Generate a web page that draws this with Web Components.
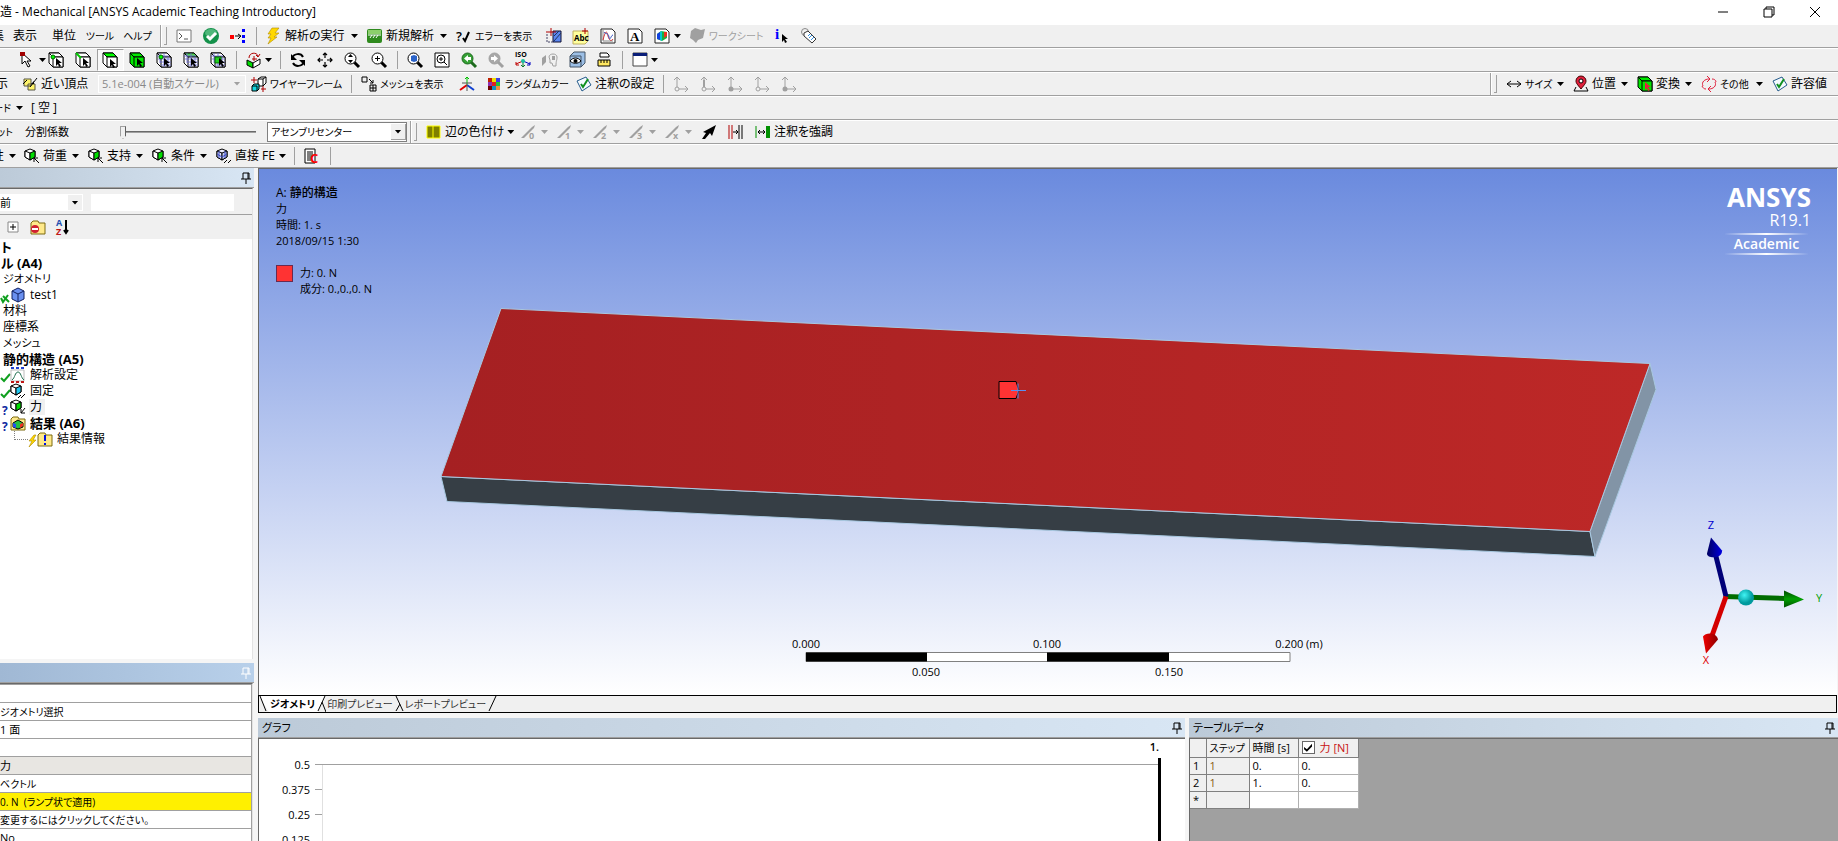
<!DOCTYPE html>
<html lang="ja">
<head>
<meta charset="utf-8">
<title>Mechanical</title>
<style>
  html, body { height: 100%; margin: 0; }
  body {
    overflow: hidden;
    background: #f0f0f0;
    color: #000;
    font: 12px/16px "Open Sans", "Noto Sans CJK JP", sans-serif;
    font-feature-settings: "palt";
  }
</style>
</head>
<body>
<mech-app>
  <title-bar slot="title">造 - Mechanical [ANSYS Academic Teaching Introductory]</title-bar>

  <tool-bar slot="bars">
    <tool-clip w="4">集</tool-clip>
    <tool-button w="42" menu>表示</tool-button>
    <tool-button w="36" menu>単位</tool-button>
    <tool-button w="36" menu kana>ツール</tool-button>
    <tool-button w="39" menu kana>ヘルプ</tool-button>
    <tool-grip></tool-grip>
    <tool-button w="27" icon="console" label="コンソール"></tool-button>
    <tool-button w="27" icon="ok" label="確認"></tool-button>
    <tool-button w="27" icon="nodes" label="ノード"></tool-button>
    <tool-sep></tool-sep>
    <tool-button w="101" icon="bolt" arrow>解析の実行</tool-button>
    <tool-button w="89" icon="analysis" arrow>新規解析</tool-button>
    <tool-button w="90" icon="query" kana>エラーを表示</tool-button>
    <tool-button w="27" icon="section" label="断面"></tool-button>
    <tool-button w="27" icon="abc" label="注釈"></tool-button>
    <tool-button w="27" icon="chart" label="チャート"></tool-button>
    <tool-button w="27" icon="letter" label="コメント"></tool-button>
    <tool-button w="36" icon="figure" label="図" arrow></tool-button>
    <tool-button w="84" icon="sheet" kana disabled>ワークシート</tool-button>
    <tool-button w="27" icon="info" label="情報"></tool-button>
    <tool-button w="27" icon="tag" label="タグ"></tool-button>
  </tool-bar>

  <tool-bar slot="bars">
    <tool-clip w="15"></tool-clip>
    <tool-button w="28" icon="cursor" label="選択" arrow></tool-button>
    <tool-button w="27" icon="selVertex" label="頂点"></tool-button>
    <tool-button w="27" icon="selEdge" label="辺"></tool-button>
    <tool-button w="27" icon="selFace" label="面" selected></tool-button>
    <tool-button w="27" icon="selBody" label="ボディ"></tool-button>
    <tool-button w="27" icon="meshNode" label="節点"></tool-button>
    <tool-button w="27" icon="meshFace" label="要素面"></tool-button>
    <tool-button w="27" icon="meshElem" label="要素"></tool-button>
    <tool-sep></tool-sep>
    <tool-button w="35" icon="extend" label="拡張" arrow></tool-button>
    <tool-sep></tool-sep>
    <tool-button w="27" icon="rotate" label="回転"></tool-button>
    <tool-button w="27" icon="pan" label="移動"></tool-button>
    <tool-button w="27" icon="zoom" label="ズーム"></tool-button>
    <tool-button w="27" icon="zoomBox" label="拡大"></tool-button>
    <tool-sep></tool-sep>
    <tool-button w="27" icon="zoomFit" label="フィット"></tool-button>
    <tool-button w="27" icon="magnifier" label="拡大鏡"></tool-button>
    <tool-button w="27" icon="prev" label="前のビュー"></tool-button>
    <tool-button w="27" icon="next" label="次のビュー" disabled></tool-button>
    <tool-button w="27" icon="iso" label="等角"></tool-button>
    <tool-button w="27" icon="lookAt" label="正面" disabled></tool-button>
    <tool-button w="27" icon="eye" label="ビュー管理"></tool-button>
    <tool-button w="27" icon="ruler" label="再スケール"></tool-button>
    <tool-sep></tool-sep>
    <tool-button w="35" icon="window" label="ビューポート" arrow></tool-button>
  </tool-bar>

  <tool-bar slot="bars">
    <tool-clip w="8">示</tool-clip>
    <tool-clip w="9"></tool-clip>
    <tool-button w="81" icon="nearVertex">近い頂点</tool-button>
    <tool-select w="148" disabled label="スケール">5.1e-004 (自動スケール)</tool-select>
    <tool-button w="101" icon="wire" kana>ワイヤーフレーム</tool-button>
    <tool-sep></tool-sep>
    <tool-button w="98" icon="mesh" kana>メッシュを表示</tool-button>
    <tool-button w="27" icon="triad" label="座標軸"></tool-button>
    <tool-button w="90" icon="colors" kana>ランダムカラー</tool-button>
    <tool-button w="88" icon="note">注釈の設定</tool-button>
    <tool-sep></tool-sep>
    <tool-button w="27" icon="axis1" label="軸 1" disabled></tool-button>
    <tool-button w="27" icon="axis2" label="軸 2" disabled></tool-button>
    <tool-button w="27" icon="axis3" label="軸 3" disabled></tool-button>
    <tool-button w="27" icon="axis1" label="軸 4" disabled></tool-button>
    <tool-button w="27" icon="axis3" label="軸 5" disabled></tool-button>
    <tool-fill></tool-fill>
    <tool-grip></tool-grip>
    <tool-button w="67" icon="size" kana arrow>サイズ</tool-button>
    <tool-button w="64" icon="place" arrow>位置</tool-button>
    <tool-button w="64" icon="convert" arrow>変換</tool-button>
    <tool-button w="71" icon="cycle" kana arrow>その他</tool-button>
    <tool-button w="71" icon="note">許容値</tool-button>
  </tool-bar>

  <tool-bar slot="bars">
    <tool-button w="26" cut kana arrow>ード</tool-button>
    <tool-button w="36" menu>[ 空 ]</tool-button>
  </tool-bar>

  <tool-bar slot="bars">
    <tool-clip w="13" kana>ット</tool-clip>
    <tool-slider>分割係数</tool-slider>
    <tool-select w="140" label="ビュー">アセンブリセンター</tool-select>
    <tool-grip></tool-grip>
    <tool-button w="95" icon="edgeColor" arrow>辺の色付け</tool-button>
    <tool-button w="36" icon="edge0" label="辺 0" arrow disabled></tool-button>
    <tool-button w="36" icon="edge1" label="辺 1" arrow disabled></tool-button>
    <tool-button w="36" icon="edge2" label="辺 2" arrow disabled></tool-button>
    <tool-button w="36" icon="edge3" label="辺 3" arrow disabled></tool-button>
    <tool-button w="36" icon="edgeX" label="辺 X" arrow disabled></tool-button>
    <tool-button w="27" icon="thickArrow" label="方向"></tool-button>
    <tool-button w="27" icon="gap" label="間隔"></tool-button>
    <tool-button w="90" icon="emph">注釈を強調</tool-button>
  </tool-bar>

  <tool-bar slot="bars">
    <tool-button w="19" cut arrow>性</tool-button>
    <tool-button w="64" icon="load" arrow>荷重</tool-button>
    <tool-button w="64" icon="load" arrow>支持</tool-button>
    <tool-button w="64" icon="load" arrow>条件</tool-button>
    <tool-button w="79" icon="directFe" arrow>直接 FE</tool-button>
    <tool-sep></tool-sep>
    <tool-button w="27" icon="command" label="コマンド"></tool-button>
    <tool-sep></tool-sep>
  </tool-bar>

  <dock-pane slot="outline">
    <outline-filter></outline-filter>
    <model-tree></model-tree>
  </dock-pane>
  <dock-pane slot="details" active>
    <detail-grid></detail-grid>
  </dock-pane>
  <model-view slot="view"></model-view>
  <view-tabs slot="tabs"></view-tabs>
  <dock-pane slot="graph" heading="グラフ"><graph-plot></graph-plot></dock-pane>
  <dock-pane slot="table" heading="テーブルデータ"><step-table></step-table></dock-pane>
</mech-app>

<script>
'use strict';

(function() {
  const CURSOR = (x, y, fill = '#000') =>
    `<path d="M${x} ${y}l6 5h-3l2 3-2 1-1-3-2 2z" fill="${fill}"/>`
  const BOX = (fill, top, side) => `
    <path d="M1 1h10l4 4v10H5L1 11z" fill="${side}" stroke="#000"/>
    <path d="M1 1h10l4 4H5z" fill="${top}" stroke="#000"/>
    <path d="M5 5h10v10H5z" fill="${fill}" stroke="#000"/>`
  const GRID = '<path d="M1 4h10M2 7h13M4 10h11M5 13h10M4 1v10M8 1v14M12 3v12" stroke="#6a6ad0" stroke-width=".8" fill="none"/>'
  const LENS = (fill = '#fff', stroke = '#000') => `
    <path d="M10 10l5 5" stroke="${stroke}" stroke-width="3"/>
    <circle cx="6.500" cy="6.500" r="5.500" fill="${fill}" stroke="${stroke}"/>`
  const CUBE = (l, r, t) => `
    <path d="M1 3l5-2 5 2v6l-5 3-5-3z" fill="${t}" stroke="#000"/>
    <path d="M1 3l5 2v7l-5-3z" fill="${l}" stroke="#000"/>
    <path d="M6 5l5-2v6l-5 3z" fill="${r}" stroke="#000"/>`
  const AXES = dot => `
    <path d="M4 13V1M1 4l3-3 3 3M4 13h11M12 10l3 3-3 3" stroke="#a0a0a0" fill="none"/>${dot}`
  const EDGE = n => `
    <path d="M0 14L11 3l3-2-1 3L3 14z" fill="#a0a0a0"/>
    <text x="8" y="15" font-size="9" font-weight="700" fill="#a0a0a0">${n}</text>`
  const FOLDER = '<path d="M1 4l2-2h5l1 2h6v11H1z" fill="#ffe98a" stroke="#7d6a10"/>'

  const ICONS = {
    console: '<path d="M1 2h14v12H1z" fill="#fff" stroke="#777"/><path d="M3 5l3 3-3 3M8 11h4" stroke="#555" fill="none"/>',
    ok: '<circle cx="8" cy="8" r="8" fill="#14914a"/><ellipse cx="8" cy="5" rx="6" ry="4" fill="#4fb77a"/><path d="M4 8l3 3 6-6" stroke="#fff" stroke-width="3" fill="none"/>',
    nodes: '<path d="M0 7h4v4H0z" fill="#f00"/><path d="M12 1h3v3h-3zM12 7h3v3h-3zM12 12h3v3h-3z" fill="#00f"/><path d="M5 8h5M8 6l3 2-3 3" stroke="#000" fill="none"/>',
    bolt: '<path d="M6 0h7L9 5h4L8 9h3L2 16l3-6H2l3-4H2z" fill="#ffd800" stroke="#b08a00" stroke-width=".6"/>',
    analysis: '<rect y="1" width="15" height="14" rx="2" fill="#2f8a1e"/><path d="M1 2h13v4H1z" fill="#8ccf6c"/><path d="M1 7h13M3 10l2-3M6 10l2-3M9 10l2-3" stroke="#fff" fill="none"/>',
    query: '<text x="0" y="13" font-size="13" font-weight="600">?</text><path d="M7 10l2 3 4-9" stroke="#000" stroke-width="2" fill="none"/>',
    section: '<path d="M7 3h8v11H7z" fill="#5a86f0" stroke="#113"/><path d="M8 8l5-5M8 13l7-8" stroke="#235" /><path d="M1 6v8h6" stroke="#446" stroke-dasharray="2 1" fill="none"/><path d="M0 4h10M5 0v8" stroke="#b00000"/>',
    abc: '<path d="M0 3h15v10l-3 3H0z" fill="#ffff9c" stroke="#c0b060"/><text x="1" y="13" font-size="8" font-weight="700">Abc</text><path d="M9 3h6M12 0v6" stroke="#b00000"/>',
    chart: '<path d="M1 1h11l3 3v11H1z" fill="#fff" stroke="#222"/><path d="M3 2v11M3 13h10" stroke="#888"/><path d="M3 12c3-12 4-8 5-4s3 6 5 3" stroke="#d03030" fill="none"/><path d="M4 4c2 3 4 0 5 5s2-2 4-2" stroke="#3050c0" fill="none"/>',
    letter: '<path d="M1 1h11l3 3v11H1z" fill="#fff" stroke="#222"/><text x="3" y="13" font-size="13" font-weight="700" font-family="Liberation Serif">A</text>',
    figure: '<path d="M1 1h11l3 3v11H1z" fill="#fff" stroke="#222"/><path d="M3 6l4-3 6 1v6l-5 3-5-2z" fill="#1cae3c"/><path d="M3 6l3-2v8l-3-1z" fill="#1040e0"/><path d="M6 4l2-1v10l-2-1z" fill="#00c8d0"/><path d="M10 4l3 0v4l-3 2z" fill="#f03020"/>',
    sheet: '<path d="M1 3l4-3 6 2 4-1-2 9-5 2-2 3-3-3-3-2z" fill="#a0a0a0"/>',
    info: '<text x="1" y="11" font-size="15" font-weight="700" fill="#00f" font-family="Liberation Serif">i</text>' + CURSOR(8, 6),
    tag: '<circle cx="4" cy="4" r="3.500" fill="none" stroke="#888"/><path d="M3 5l4-2 8 8-4 4-8-7z" fill="#fff" stroke="#333"/><path d="M7 8l2-2M8 10l3-3M10 12l3-3" stroke="#2f8fe0"/>',
    cursor: '<path d="M2 1v11l3-3 3 6 2-1-3-5h4z" fill="#fff" stroke="#000"/><path d="M0 0h5v4H0z" fill="#a00000"/>',
    selVertex: BOX('#fff', '#fff', '#fff') + '<circle cx="5" cy="5" r="2" fill="#0f0" stroke="#060"/>' + CURSOR(8, 6),
    selEdge: BOX('#fff', '#fff', '#fff') + '<path d="M1 1l5 5" stroke="#0c0" stroke-width="2"/>' + CURSOR(8, 6),
    selFace: BOX('#fff', '#0f0', '#fff') + CURSOR(8, 7),
    selBody: BOX('#00e800', '#00e800', '#00e800') + CURSOR(8, 6),
    meshNode: BOX('#fff', '#fff', '#fff') + GRID + '<circle cx="5" cy="5" r="2" fill="#0f0" stroke="#060"/>' + CURSOR(8, 6),
    meshFace: BOX('#fff', '#50d050', '#fff') + GRID + CURSOR(8, 6),
    meshElem: BOX('#fff', '#fff', '#fff') + GRID + '<path d="M5 5h6v6H5z" fill="#20d020" stroke="#060"/>' + CURSOR(9, 6),
    extend: '<path d="M1 8l6 3v5l-6-3z" fill="#0d0" stroke="#000"/><path d="M7 11l7-4v5l-7 4z" fill="#fff" stroke="#000"/><path d="M3 6c0-6 8-6 9-2M10 3l2 2 2-3M8 4v5M6 7h5" stroke="#b00000" fill="none"/>',
    rotate: '<path d="M2 6c2-5 9-5 11-1" stroke="#000" stroke-width="2" fill="none"/><path d="M1 2v6h6z"/><path d="M14 10c-2 5-9 5-11 1" stroke="#000" stroke-width="2" fill="none"/><path d="M15 14V8H9z"/>',
    pan: '<path d="M8 1v5M8 10v5M1 8h5M10 8h5M6 3l2-2 2 2M6 13l2 2 2-2M3 6L1 8l2 2M13 6l2 2-2 2" stroke="#000" stroke-width="1.200" fill="none"/>',
    zoom: LENS() + '<path d="M6.500 2l2.500 3H4zM6.500 11L4 8h5z"/>',
    zoomBox: LENS() + '<path d="M4 6.500h5M6.500 4v5" stroke="#000"/>',
    zoomFit: LENS() + '<path d="M4 4l3-1 3 1v5l-3 1-3-1z" fill="#2a62c8"/>',
    magnifier: '<path d="M1 1h14v14H1z" fill="#fff" stroke="#000"/><circle cx="7" cy="7" r="4" fill="#fff" stroke="#000"/><path d="M5 7h4M7 5v4M10 10l3 3" stroke="#000"/>',
    prev: LENS('#35a035', '#1d6a1d') + '<path d="M3 6.500L7 3v2h3v3H7v2z" fill="#fff"/>',
    next: LENS('#a8a8a8', '#a0a0a0') + '<path d="M10 6.500L6 3v2H3v3h3v2z" fill="#fff"/>',
    iso: '<text x="0" y="5" font-size="7" font-weight="700">ISO</text><path d="M8 9v6M6 13l2 2 2-2" stroke="#0a7a2a" fill="none"/><path d="M8 9l-7 3M1 10v3h3" stroke="#c00000" fill="none"/><path d="M8 9l7 3M15 10v3h-3" stroke="#0000c0" fill="none"/><circle cx="8" cy="9" r="2" fill="#1cc0a0"/>',
    lookAt: '<path d="M0 6l4-3v7l-4 4z" fill="#a0a0a0"/><path d="M7 5c0-4 8-4 8 0s-1 3-1 9h-3l-1-3H8V8z" fill="none" stroke="#a0a0a0"/><path d="M10 4h3v4h-3z" fill="#a0a0a0"/>',
    eye: '<path d="M1 4l4-4h11v11l-4 4H1z" fill="#9cbfe6" stroke="#456"/><path d="M1 4h11v11" stroke="#456" fill="none"/><path d="M1 9c3-4 8-4 11 0-3 3-8 3-11 0z" fill="#fff" stroke="#000"/><circle cx="6.500" cy="9" r="2"/>',
    ruler: '<path d="M4 1h7l2 2v2H4z" fill="#fff" stroke="#000"/><path d="M2 8h12v6H2z" fill="#ffe860" stroke="#000"/><path d="M5 8v3M8 8v3M11 8v3" stroke="#000"/>',
    window: '<path d="M1 1h14v13H1z" fill="#fff" stroke="#444"/><path d="M1 1h14v3H1z" fill="#0a1e78"/>',
    nearVertex: '<path d="M2 3h7v7H2zM6 8h7v6H6z" fill="#fff46a" stroke="#554"/><path d="M1 8l4-4M8 11l7-9" stroke="#000"/><path d="M9 8l3-3v3z"/>',
    wire: '<path d="M7 3l3-2h5v6l-3 3H7zM7 3h5v7M12 3l3-2" fill="#fff" stroke="#000"/><path d="M1 10l2-2h5v5l-2 2H1z" fill="#16d8e0" stroke="#000"/><path d="M1 10h5v5" fill="none" stroke="#000"/><path d="M0 4h6M3 1v6M10 13h5M12 10v6" stroke="#b00000"/>',
    mesh: '<path d="M1 1h5v5H1zM9 9h6v6H9zM12 9v6M9 12h6" fill="none" stroke="#000"/><path d="M8 3l4 4M12 4v3H9" fill="none" stroke="#000"/>',
    triad: '<path d="M8 9V1M6 3l2-2 2 2" stroke="#00c000" fill="none"/><path d="M8 9l-7 5" stroke="#e00000" stroke-width="2"/><path d="M8 9l7 5" stroke="#1040d0" stroke-width="2"/><path d="M3 7h10M8 9v6" stroke="#555"/>',
    colors: '<path d="M2 2h4v4H2z" fill="#c02000"/><path d="M6 2h4v4H6z" fill="#f0e000"/><path d="M10 2h4v4h-4z" fill="#4040e0"/><path d="M2 6h4v4H2z" fill="#9030b0"/><path d="M6 6h4v4H6z" fill="#e02020"/><path d="M10 6h4v4h-4z" fill="#20c040"/><path d="M2 10h4v4H2z" fill="#700000"/><path d="M6 10h4v4H6z" fill="#1090c0"/><path d="M10 10h4v4h-4z" fill="#f09040"/>',
    note: '<path d="M1 5l9-4 5 8-9 6z" fill="#f4faff" stroke="#245a8a"/><path d="M5 8l2 3 5-8" stroke="#109020" stroke-width="2" fill="none"/>',
    axis1: AXES('<circle cx="4" cy="13" r="2" fill="#f0f0f0" stroke="#a0a0a0"/>'),
    axis2: AXES('<path d="M3 4h2v9H3z" fill="#a0a0a0"/><circle cx="4" cy="13" r="2" fill="#f0f0f0" stroke="#a0a0a0"/>'),
    axis3: AXES('<circle cx="4" cy="13" r="2.500" fill="#a0a0a0"/>'),
    size: '<path d="M1 8h14M5 5L1 8l4 3M11 5l4 3-4 3" stroke="#000" fill="none"/>',
    place: '<path d="M8 13C4 8 3 7 3 5a5 5 0 0110 0c0 2-1 3-5 8z" fill="#e0203c" stroke="#400"/><circle cx="8" cy="5" r="2" fill="#fff" stroke="#000"/><path d="M3 11l-2 4h14l-2-4" stroke="#000" fill="none"/>',
    convert: BOX('#00e800', '#00e800', '#00e800') + CURSOR(8, 6, '#e02040'),
    cycle: '<path d="M2 10C0 6 4 3 8 3M6 0l3 3-3 3M14 6c2 4-2 7-6 7M10 10l-3 3 3 3M11 3c2 0 4 1 4 3M5 13c-2 0-3-1-4-3" stroke="#e0203c" fill="none"/>',
    edgeColor: '<path d="M1 2h13v12H1z" fill="#808000" stroke="#ffff00"/><path d="M7 2v12" stroke="#ffff00"/>',
    edge0: EDGE('0'), edge1: EDGE('1'), edge2: EDGE('2'), edge3: EDGE('3'), edgeX: EDGE('x'),
    thickArrow: '<path d="M1 15l4-6-3-1L15 1l-4 11-2-3-5 6z"/>',
    gap: '<path d="M1 1v14M4 1v14" stroke="#b00000"/><path d="M11 1v14M14 1v14M5 8h5M8 6l2 2-2 2" stroke="#000" fill="none"/>',
    emph: '<path d="M1 2v12" stroke="#009000"/><path d="M11 2h4v12h-4z" fill="#009000"/><path d="M3 8h7M5 6L3 8l2 2M8 6l2 2-2 2" stroke="#000" fill="none"/>',
    load: CUBE('#fff', '#0d0', '#fff') + '<path d="M10 10l5 5M10 14v-4h4" stroke="#000" fill="none"/>',
    fixed: CUBE('#fff', '#20c8f0', '#fff') + '<path d="M8 15l3-3M11 15l4-4" stroke="#000"/>',
    force: CUBE('#fff', '#0d0', '#fff') + '<path d="M15 9l-4 5M11 10v4h4" stroke="#000" fill="none"/>',
    directFe: CUBE('#dfe4ff', '#c4ccf4', '#eef') + '<path d="M3 3v7M9 3v7M1 6l5 3 5-3" stroke="#3a48c0" fill="none"/><path d="M8 15l3-3M12 15l3-3" stroke="#000"/>',
    command: '<path d="M1 1h10v14H1z" fill="#fff" stroke="#000"/><path d="M3 4h6M3 6h6M3 8h5M3 10h4M3 12h4" stroke="#000"/><text x="6" y="15" font-size="13" font-weight="700" fill="#f00">C</text>',
    plus: '<path d="M3 3h10v10H3z" fill="#fff" stroke="#888"/><path d="M5 8h6M8 5v6" stroke="#000"/>',
    folderStop: FOLDER + '<circle cx="5" cy="10" r="4" fill="#d02030"/><path d="M2 10h6" stroke="#fff" stroke-width="2"/>',
    sort: '<text x="1" y="7" font-size="9" font-weight="700" fill="#2450b0">A</text><text x="1" y="16" font-size="9" font-weight="700" fill="#c01818">Z</text><path d="M11 1v13M9 11l2 3 2-3" stroke="#000" stroke-width="2" fill="none"/>',
    part: '<path d="M2 4l6-3 6 3v8l-6 3-6-3z" fill="#6a90f0" stroke="#102060"/><path d="M2 4l6 3 6-3M8 7v8" stroke="#102060" fill="none"/>',
    settings: '<path d="M1 3h13v11H1z" fill="#fff" stroke="#bbb"/><path d="M2 13c3-2 3-8 6-8s3 6 6 8" stroke="#207050" fill="none"/><path d="M1 1h3M6 1h3M11 1h3" stroke="#2040d0" stroke-width="2"/><path d="M1 15h3M6 15h3M11 15h3" stroke="#c01818" stroke-width="2"/>',
    results: FOLDER + '<path d="M3 8l5-3 5 3v4l-5 2-5-2z" fill="#20c040" stroke="#000"/><path d="M3 8l3 1v4l-3-1z" fill="#2050f0"/><path d="M10 9l3-1v3l-3 2z" fill="#f03020"/>',
    notice: FOLDER + '<path d="M8 4v6M8 12v2" stroke="#0010e0" stroke-width="2"/>',
    check: '<path d="M1 11l3 3 6-7" stroke="#10a020" stroke-width="2" fill="none"/>',
    suppressed: '<path d="M1 11l2 4 5-7M3 9l6 6" stroke="#10a020" stroke-width="2" fill="none"/>',
    pending: '<text x="2" y="16" font-size="12" font-weight="700" fill="#1028a0">?</text>',
    flash: '<path d="M6 4L1 10h3l-3 6 7-7H5l3-5z" fill="#ffd800" stroke="#b08a00" stroke-width=".6"/>',
    pin: '<path d="M5 3h6v6M5 3v6M3 9h10M8 9v5M10 3v6" stroke="currentColor" fill="none"/>',
    min: '<path d="M3 8h10" stroke="#000"/>',
    restore: '<path d="M3 5h8v8H3zM5 5V3h8v8h-2" stroke="#000" fill="none"/>',
    close: '<path d="M3 3l10 10M13 3L3 13" stroke="#000" fill="none"/>'
  }

  const icon = name => `
    <svg class="icon" viewBox="0 0 16 16" width="16" height="16" aria-hidden="true">${ICONS[name] || ''}</svg>`

  class BaseElement extends HTMLElement {
    constructor() {
      super()
      this.attachShadow({ mode: 'open' })
    }

    connectedCallback() {
      this.shadowRoot.innerHTML = `
        <style>
        * { box-sizing: border-box; }
        :host { display: block; box-sizing: border-box; }
        button, select, input { margin: 0; padding: 0; border: 0; border-radius: 0; background: none; color: inherit; font: inherit; font-feature-settings: inherit; }
        .icon { flex: none; display: block; overflow: visible; }
        .arrow { flex: none; width: 7px; height: 4px; background: currentColor; clip-path: polygon(0 0, 100% 0, 50% 100%); }
        </style>
        ${this.render()}
      `
    }

    render() {
      return ''
    }

    width() {
      return `:host { flex: none; width: ${this.getAttribute('w')}px; }`
    }
  }

  class MechApp extends BaseElement {
    render() {
      return `
        <style>
        :host { display: flex; flex-direction: column; height: 100vh; }
        .work { flex: 1; min-height: 0; display: flex; gap: 4px; background: #f5f5f5; }
        .side { flex: none; width: 254px; display: flex; flex-direction: column; gap: 4px; }
        .main { flex: 1; min-width: 0; display: flex; flex-direction: column; }
        .bottom { flex: none; height: 123px; display: flex; gap: 4px; margin-top: 5px; }
        ::slotted([slot=outline]), ::slotted([slot=view]) { flex: 1; min-height: 0; }
        ::slotted([slot=details]) { flex: none; height: 178px; }
        ::slotted([slot=graph]) { flex: 10; min-width: 0; }
        ::slotted([slot=table]) { flex: 7; min-width: 0; }
        </style>
        <slot name="title"></slot>
        <slot name="bars"></slot>
        <div class="work">
          <div class="side">
            <slot name="outline"></slot>
            <slot name="details"></slot>
          </div>
          <div class="main">
            <slot name="view"></slot>
            <slot name="tabs"></slot>
            <div class="bottom">
              <slot name="graph"></slot>
              <slot name="table"></slot>
            </div>
          </div>
        </div>
      `
    }
  }

  class TitleBar extends BaseElement {
    render() {
      return `
        <style>
        :host { flex: none; display: flex; align-items: center; height: 24px; background: #fff; }
        .name { flex: 1; }
        button { width: 46px; height: 20px; display: flex; align-items: center; justify-content: center; }
        </style>
        <span class="name"><slot></slot></span>
        <button aria-label="最小化">${icon('min')}</button>
        <button aria-label="元に戻す">${icon('restore')}</button>
        <button aria-label="閉じる">${icon('close')}</button>
      `
    }
  }

  class ToolBar extends BaseElement {
    render() {
      return `
        <style>
        :host { flex: none; display: flex; align-items: center; height: 24px; border-top: 1px solid #fff; border-bottom: 1px solid #a0a0a0; background: #f0f0f0; }
        </style>
        <slot></slot>
      `
    }
  }

  class ToolButton extends BaseElement {
    render() {
      const has = name => this.hasAttribute(name)
      const label = this.getAttribute('label')
      return `
        <style>
        ${this.width()}
        :host([kana]) { font-size: 10px; }
        button { width: 100%; height: 22px; display: flex; align-items: center; gap: 3px; padding: 0 4px 0 5px; white-space: nowrap; }
        button:disabled { color: #a0a0a0; }
        :host([menu]) button { justify-content: center; padding: 0; }
        :host([cut]) button { justify-content: flex-end; gap: 5px; padding: 0 3px 0 0; overflow: hidden; }
        :host([selected]) button { border: 1px solid #a0a0a0; border-right-color: #fff; border-bottom-color: #fff; background: #f8f8f8; padding-left: 4px; }
        .arrow { margin-left: auto; }
        :host([cut]) .arrow { margin-left: 0; }
        </style>
        <button type="button" ${label ? `aria-label="${label}"` : ''} ${has('disabled') ? 'disabled' : ''}>
          ${has('icon') ? icon(this.getAttribute('icon')) : ''}
          ${label ? '' : '<span><slot></slot></span>'}
          ${has('arrow') ? '<i class="arrow"></i>' : ''}
        </button>
      `
    }
  }

  // 左端で切れている項目
  class ToolClip extends BaseElement {
    render() {
      return `
        <style>
        ${this.width()}
        :host { display: flex; justify-content: flex-end; overflow: hidden; white-space: nowrap; }
        :host([kana]) { font-size: 10px; }
        </style>
        <slot></slot>
      `
    }
  }

  class ToolSep extends BaseElement {
    render() {
      return `
        <style>
        :host { flex: none; width: 9px; height: 18px; padding-left: 4px; }
        i { display: block; width: 1px; height: 100%; background: #a0a0a0; }
        </style>
        <i></i>
      `
    }
  }

  class ToolGrip extends BaseElement {
    render() {
      return `
        <style>
        :host { flex: none; display: flex; align-items: center; justify-content: space-between; width: 14px; height: 22px; padding: 0 4px 0 3px; }
        .end { width: 2px; height: 22px; background: #a0a0a0; border-right: 1px solid #fff; }
        .grip { width: 3px; height: 18px; border: 1px solid #a0a0a0; border-width: 0 1px 1px 0; }
        </style>
        <i class="end"></i><i class="grip"></i>
      `
    }
  }

  class ToolFill extends BaseElement {
    render() {
      return '<style>:host { flex: 1; }</style>'
    }
  }

  class ToolSelect extends BaseElement {
    render() {
      const off = this.hasAttribute('disabled')
      return `
        <style>
        ${this.width()}
        :host { display: flex; align-items: center; height: ${off ? 18 : 20}px; border: 1px solid ${off ? '#fff' : '#808080'}; background: ${off ? '#f0f0f0' : '#fff'}; }
        select { flex: 1; min-width: 0; height: 100%; padding-left: 3px; appearance: none; font-size: ${off ? 11 : 10}px; }
        select:disabled { color: #888; opacity: 1; }
        .drop { width: 15px; height: 16px; display: grid; place-items: center; background: #f0f0f0; color: ${off ? '#a0a0a0' : '#000'}; border: 1px solid ${off ? '#f0f0f0' : '#a0a0a0'}; border-width: 0 1px 1px 0; }
        </style>
        <select aria-label="${this.getAttribute('label')}" ${off ? 'disabled' : ''}><option>${this.textContent}</option></select>
        <span class="drop"><i class="arrow"></i></span>
      `
    }
  }

  class ToolSlider extends BaseElement {
    render() {
      return `
        <style>
        :host { flex: none; display: flex; align-items: center; width: 254px; padding: 0 11px 0 12px; font-size: 11px; }
        label { flex: 1; }
        input { width: 136px; height: 16px; appearance: none; }
        input::-webkit-slider-runnable-track { height: 2px; background: #6a6a6a; border-bottom: 1px solid #a0a0a0; }
        input::-webkit-slider-thumb { appearance: none; width: 6px; height: 13px; margin-top: -5px; background: #f0f0f0; border: 1px solid #a0a0a0; border-right-color: #606060; clip-path: polygon(0 0, 100% 0, 100% 75%, 50% 100%, 0 75%); }
        </style>
        <label for="factor"><slot></slot></label>
        <input id="factor" type="range" min="0" max="100" value="0">
      `
    }
  }

  class DockPane extends BaseElement {
    render() {
      return `
        <style>
        :host { display: flex; flex-direction: column; }
        header { flex: none; height: 20px; display: flex; align-items: center; justify-content: space-between; padding: 0 0 0 4px; background: linear-gradient(90deg, #bccad8, #d8e6f4); border-bottom: 1px solid #a0a0a0; font-size: 11px; }
        :host([active]) header { background: linear-gradient(90deg, #a0b8d4, #b8d0ea); color: #fff; }
        button { width: 16px; height: 16px; }
        .content { flex: 1; min-height: 0; display: flex; flex-direction: column; overflow: hidden; border-top: 1px solid #696969; border-left: 1px solid #696969; }
        :host([slot=outline]) .content, :host([slot=details]) .content { border-left: 0; border-right: 1px solid #e3e3e3; margin-right: 1px; }
        </style>
        <header>
          <span>${this.getAttribute('heading') || ''}</span>
          <button type="button" aria-label="自動的に隠す">${icon('pin')}</button>
        </header>
        <div class="content"><slot></slot></div>
      `
    }
  }

  class OutlineFilter extends BaseElement {
    render() {
      return `
        <style>
        :host { flex: none; background: #f0f0f0; }
        .row { display: flex; align-items: center; height: 26px; gap: 8px; padding: 2px 18px 0 0; border-bottom: 1px solid #a0a0a0; }
        .pick { display: flex; align-items: center; width: 83px; height: 17px; background: #fff; }
        .pick select { flex: 1; height: 17px; appearance: none; font-size: 11px; }
        .pick span { width: 14px; height: 15px; margin-right: 1px; display: grid; place-items: center; background: #f0f0f0; }
        input { flex: 1; min-width: 0; height: 17px; background: #fff; }
        .tools { display: flex; gap: 8px; height: 24px; align-items: center; padding-left: 5px; }
        .tools button { width: 16px; height: 16px; margin-right: 1px; }
        </style>
        <div class="row">
          <span class="pick">
            <select aria-label="フィルター"><option>前</option></select>
            <span><i class="arrow"></i></span>
          </span>
          <input type="text" aria-label="検索">
        </div>
        <div class="tools">
          <button type="button" aria-label="展開">${icon('plus')}</button>
          <button type="button" aria-label="フォルダー">${icon('folderStop')}</button>
          <button type="button" aria-label="並べ替え">${icon('sort')}</button>
        </div>
      `
    }
  }

  const TREE = [
    { text: 'ト', level: 0, bold: true },
    { text: 'ル (A4)', level: 0, bold: true },
    { text: 'ジオメトリ', level: 1 },
    { text: 'test1', level: 2, state: 'suppressed', icon: 'part' },
    { text: '材料', level: 1 },
    { text: '座標系', level: 1 },
    { text: 'メッシュ', level: 1 },
    { text: '静的構造 (A5)', level: 1, bold: true },
    { text: '解析設定', level: 2, state: 'check', icon: 'settings' },
    { text: '固定', level: 2, state: 'check', icon: 'fixed' },
    { text: '力', level: 2, state: 'pending', icon: 'force', selected: true },
    { text: '結果 (A6)', level: 2, state: 'pending', icon: 'results', bold: true },
    { text: '結果情報', level: 3, state: 'flash', icon: 'notice' }
  ]
  const KANA_REG = /^[ァ-ー]{2,}$/

  class ModelTree extends BaseElement {
    render() {
      return `
        <style>
        :host { flex: 1; min-height: 0; overflow: hidden; background: #fff; }
        ul { margin: 0; padding: 0; list-style: none; }
        li { display: flex; align-items: center; height: 16px; white-space: nowrap; }
        .l1 { padding-left: 2px; }
        .l3 { padding-left: 14px; }
        .l3::before { content: ""; width: 13px; height: 8px; margin-bottom: 8px; border: 1px dotted #808080; border-width: 0 0 1px 1px; }
        .state { width: 10px; height: 16px; }
        .l3 .state { width: 9px; }
        .text { padding: 0 1px; }
        .icon + .text { margin-left: 3px; }
        .bold { font-weight: 700; font-size: 13px; }
        .kana { font-size: 11px; }
        .selected .text { background: #f0f0f0; padding-right: 3px; }
        </style>
        <ul>
          ${TREE.map(n => `
            <li class="l${n.level} ${n.bold ? 'bold' : ''} ${n.selected ? 'selected' : ''} ${KANA_REG.test(n.text) ? 'kana' : ''}">
              ${n.state ? `<span class="state">${icon(n.state)}</span>` : ''}
              ${n.icon ? icon(n.icon) : ''}
              <span class="text">${n.text}</span>
            </li>`).join('')}
        </ul>
      `
    }
  }

  class DetailGrid extends BaseElement {
    render() {
      const rows = ['', 'ジオメトリ選択', '1 面', '', '力', 'ベクトル', '0. N  (ランプ状で適用)', '変更するにはクリックしてください。', 'No']
      const kind = { 4: 'group', 6: 'edited' }
      return `
        <style>
        :host { flex: 1; background: #fff; }
        table { width: 100%; border-collapse: collapse; table-layout: fixed; font-size: 11px; }
        td { height: 18px; padding: 0; border: 1px solid #a0a0a0; border-width: 1px 1px 1px 0; white-space: pre; overflow: hidden; line-height: 16px; }
        .group { background: #e8e6e2; }
        .edited { background: #fff000; }
        .k { font-size: 10px; }
        </style>
        <table>
          ${rows.map((text, i) => `<tr class="${kind[i] || ''}"><td class="${/[ァ-ン]{3}/.test(text) ? 'k' : ''}">${text}</td></tr>`).join('')}
        </table>
      `
    }
  }

  class ModelView extends BaseElement {
    render() {
      return `
        <style>
        :host { position: relative; overflow: hidden; background: linear-gradient(#6a8ade, #fff); border: solid #696969; border-width: 1px 0 0 1px; margin-right: 1px; }
        .scene { position: absolute; inset: 0; width: 100%; height: 100%; }
        .info { position: absolute; left: 17px; top: 16px; font-size: 11px; }
        p { margin: 0; }
        .title { font-weight: 500; font-size: 12px; }
        .legend { display: flex; gap: 7px; margin-top: 16px; }
        .swatch { width: 17px; height: 17px; border: 1px solid #6a2a50; background: #ff3333; }
        .brand { position: absolute; right: 26px; top: 14px; width: 86px; color: #fff; text-align: right; }
        .brand .name { font-size: 26px; font-weight: 700; line-height: 28px; font-family: "Noto Sans", sans-serif; }
        .brand .rel { font-size: 16px; line-height: 18px; }
        .brand .kind { margin: 4px 3px 0 0; border: solid transparent; border-width: 2px 0; border-image: linear-gradient(90deg, transparent, #fff, transparent) 1; text-align: center; font-size: 14px; font-weight: 600; line-height: 18px; }
        text { font-size: 11px; text-anchor: middle; }
        </style>
        <svg class="scene" viewBox="259 169 1578 525">
          <defs>
            <linearGradient id="face"><stop offset="0" stop-color="#a52022"/><stop offset="1" stop-color="#bd2827"/></linearGradient>
            <linearGradient id="blue"><stop offset="0" stop-color="#000060"/><stop offset="1" stop-color="#0000e0"/></linearGradient>
            <linearGradient id="red"><stop offset="0" stop-color="#f00000"/><stop offset="1" stop-color="#8c0000"/></linearGradient>
            <linearGradient id="green" x2="0" y2="1"><stop offset="0" stop-color="#004800"/><stop offset=".5" stop-color="#00a000"/><stop offset="1" stop-color="#005000"/></linearGradient>
            <radialGradient id="ball" cx=".4" cy=".35"><stop offset="0" stop-color="#40f4f4"/><stop offset="1" stop-color="#009a9e"/></radialGradient>
          </defs>
          <g stroke="#a8c8e0" stroke-linejoin="round">
            <path d="M441 476L1590 531l5 25L447 501z" fill="#363e45"/>
            <path d="M1650 363l6 26-61 167-5-25z" fill="#8294a6"/>
            <path d="M501 308l1149 55-60 168L441 476z" fill="url(#face)"/>
          </g>
          <path d="M999 381h17l3 9-3 8h-17z" fill="#ff3333" stroke="#000"/>
          <path d="M1011 390h15M1018 383v15" stroke="#5a90f0"/>
          <path d="M806 652h484v9H806z" fill="#fff" stroke="#808080"/>
          <path d="M806 652h121v9H806zM1047 652h122v9h-122z"/>
          <g>
            <text x="806" y="647">0.000</text>
            <text x="1047" y="647">0.100</text>
            <text x="1299" y="647">0.200 (m)</text>
            <text x="926" y="675">0.050</text>
            <text x="1169" y="675">0.150</text>
          </g>
          <path d="M1725 596l60 2" stroke="#006c00" stroke-width="5"/>
          <path d="M1784 590l20 9-20 8z" fill="url(#green)"/>
          <circle cx="1746" cy="597" r="8" fill="url(#ball)"/>
          <path d="M1726 596l-11-44" stroke="#000078" stroke-width="5"/>
          <path d="M1711 537l11 13c1 8-15 9-15 3z" fill="url(#blue)"/>
          <path d="M1726 596l-15 42" stroke="#d40000" stroke-width="5"/>
          <path d="M1706 653l-3-17c3-5 14-4 15 3z" fill="url(#red)"/>
          <text x="1711" y="528" fill="#0000d0">Z</text>
          <text x="1819" y="601" fill="#00a000">Y</text>
          <text x="1706" y="663" fill="#e00000">X</text>
        </svg>
        <div class="info">
          <p class="title">A: 静的構造</p>
          <p>力</p>
          <p>時間: 1. s</p>
          <p>2018/09/15 1:30</p>
          <div class="legend">
            <i class="swatch"></i>
            <div><p>力: 0. N</p><p>成分: 0.,0.,0. N</p></div>
          </div>
        </div>
        <div class="brand">
          <div class="name">ANSYS</div>
          <div class="rel">R19.1</div>
          <div class="kind">Academic</div>
        </div>
      `
    }
  }

  class ViewTabs extends BaseElement {
    render() {
      const slant = d => `<svg width="10" height="16" viewBox="0 0 10 16" aria-hidden="true">${d}</svg>`
      const line = d => `<path d="${d}" fill="none" stroke="#000"/>`
      return `
        <style>
        :host { flex: none; display: flex; height: 18px; margin-right: 1px; border: 1px solid #000; background: #f0f0f0; font-size: 10px; }
        svg { flex: none; background: #f0f0f0; }
        button { height: 16px; padding: 0 1px; line-height: 16px; white-space: nowrap; color: #333; }
        .on { background: #fff; color: #000; font-weight: 700; }
        </style>
        ${slant('<path d="M0 0h10v16z" fill="#fff"/>' + line('M1 0l6 15'))}
        <button type="button" class="on">ジオメトリ</button>
        ${slant('<path d="M0 0h10L2 16H0z" fill="#fff"/>' + line('M9 0L2 15M6 6l4 10'))}
        <button type="button">印刷プレビュー</button>
        ${slant(line('M2 0l7 15M6 8l-4 7'))}
        <button type="button">レポートプレビュー</button>
        ${slant(line('M9 0L2 15'))}
      `
    }
  }

  class GraphPlot extends BaseElement {
    render() {
      return `
        <style>
        :host { flex: 1; display: grid; grid-template-columns: 51px 1fr 21px; grid-template-rows: 25px 1fr; column-gap: 5px; background: #fff; font-size: 11px; }
        .end { grid-column: 2; text-align: right; font-weight: 600; }
        .ticks { grid-row: 2; display: flex; flex-direction: column; gap: 9px; text-align: right; margin-top: -7px; height: 84px; overflow: hidden; }
        .plot { grid-row: 2; grid-column: 2 / 3; position: relative; border-top: 1px solid #a0a0a0; }
        .plot::before { content: ""; position: absolute; left: 7px; top: 0; bottom: 0; border-left: 1px solid #e0e0e0; }
        .plot::after { content: ""; position: absolute; right: -2px; top: -7px; bottom: 0; width: 3px; background: #000; }
        .plot i { display: block; width: 7px; height: 25px; border-bottom: 1px solid #a0a0a0; }
        </style>
        <div class="end">1.</div>
        <div class="ticks"><span>0.5</span><span>0.375</span><span>0.25</span><span>0.125</span></div>
        <div class="plot"><i></i><i></i></div>
      `
    }
  }

  class StepTable extends BaseElement {
    render() {
      return `
        <style>
        :host { flex: 1; background: #a0a0a0; }
        table { border-collapse: collapse; font-size: 11px; line-height: 16px; table-layout: fixed; width: 169px; }
        th, td { height: 17px; padding: 0 0 0 3px; border: 1px solid #b0b0b0; border-width: 0 1px 1px 0; text-align: left; font-weight: 400; white-space: nowrap; background: #fff; overflow: hidden; }
        thead th { height: 18px; }
        thead th, tbody th, .step { background: #f0f0f0; border-color: #808080; }
        .step { color: #8a5a10; }
        .kana { font-size: 10px; }
        label { display: flex; align-items: center; gap: 5px; color: #c81414; }
        input { appearance: none; display: grid; place-items: center; width: 13px; height: 13px; background: #fff; border: 1px solid #696969; }
        input:checked::before { content: ""; width: 8px; height: 8px; background: #000; clip-path: polygon(0 40%, 35% 70%, 100% 0, 100% 35%, 35% 100%, 0 70%); }
        </style>
        <table>
          <colgroup><col style="width:16px"><col style="width:43px"><col style="width:49px"><col></colgroup>
          <thead>
            <tr><th></th><th class="kana">ステップ</th><th>時間 [s]</th><th><label><input type="checkbox" checked>力 [N]</label></th></tr>
          </thead>
          <tbody>
            <tr><th>1</th><td class="step">1</td><td>0.</td><td>0.</td></tr>
            <tr><th>2</th><td class="step">1</td><td>1.</td><td>0.</td></tr>
            <tr><th>*</th><td class="step"></td><td></td><td></td></tr>
          </tbody>
        </table>
      `
    }
  }

  customElements.define('mech-app', MechApp)
  customElements.define('title-bar', TitleBar)
  customElements.define('tool-bar', ToolBar)
  customElements.define('tool-button', ToolButton)
  customElements.define('tool-clip', ToolClip)
  customElements.define('tool-sep', ToolSep)
  customElements.define('tool-grip', ToolGrip)
  customElements.define('tool-fill', ToolFill)
  customElements.define('tool-select', ToolSelect)
  customElements.define('tool-slider', ToolSlider)
  customElements.define('dock-pane', DockPane)
  customElements.define('outline-filter', OutlineFilter)
  customElements.define('model-tree', ModelTree)
  customElements.define('detail-grid', DetailGrid)
  customElements.define('model-view', ModelView)
  customElements.define('view-tabs', ViewTabs)
  customElements.define('graph-plot', GraphPlot)
  customElements.define('step-table', StepTable)
})();
</script>
</body>
</html>
